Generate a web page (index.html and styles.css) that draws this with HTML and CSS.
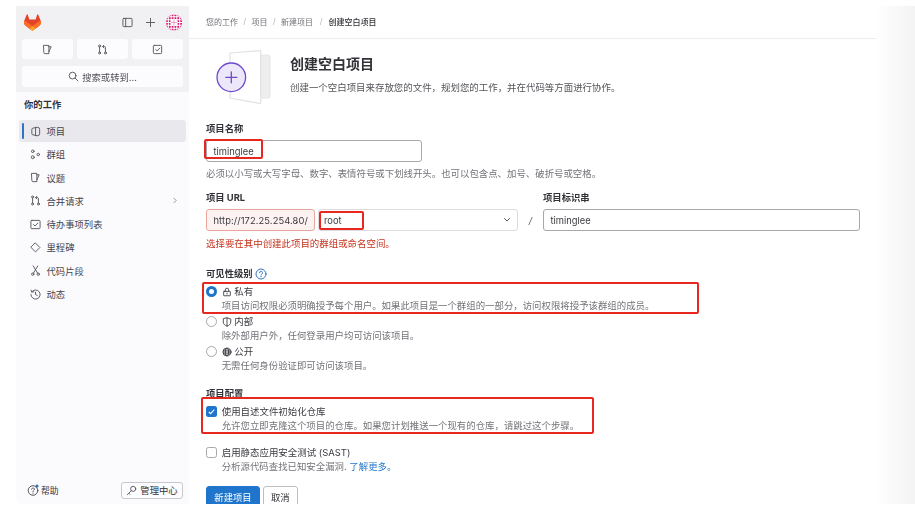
FILE: index.html
```html
<!DOCTYPE html>
<html lang="zh-CN">
<head>
<meta charset="utf-8">
<title>创建空白项目</title>
<link rel="stylesheet" href="styles.css">
</head>
<body>
<div class="frame">
  <aside class="sidebar">
    <div class="side-top">
      <div class="brand-row">
        <svg class="logo" viewBox="0 0 25 24"><path d="m24.507 9.5-.034-.09L21.082.562a.896.896 0 0 0-1.694.091l-2.29 7.01H7.825L5.535.653a.898.898 0 0 0-1.694-.09L.451 9.411.416 9.5a6.297 6.297 0 0 0 2.09 7.278l.012.01.03.022 5.16 3.867 2.56 1.935 1.554 1.176a1.051 1.051 0 0 0 1.268 0l1.555-1.176 2.56-1.935 5.197-3.89.014-.01A6.297 6.297 0 0 0 24.507 9.5Z" fill="#E24329"/><path d="m24.507 9.5-.034-.09a11.44 11.44 0 0 0-4.56 2.051l-7.447 5.632 4.742 3.584 5.197-3.89.014-.01A6.297 6.297 0 0 0 24.507 9.5Z" fill="#FC6D26"/><path d="m7.707 20.677 2.56 1.935 1.555 1.176a1.051 1.051 0 0 0 1.268 0l1.555-1.176 2.56-1.935-4.743-3.584-4.755 3.584Z" fill="#FCA326"/><path d="M5.01 11.461a11.43 11.43 0 0 0-4.56-2.05L.416 9.5a6.297 6.297 0 0 0 2.09 7.278l.012.01.03.022 5.16 3.867 4.745-3.584-7.444-5.632Z" fill="#FC6D26"/></svg>
        <svg class="ic top-panel" viewBox="0 0 12 12"><rect x="1" y="1.5" width="10" height="9" rx="1"/><path d="M4 1.5v9"/></svg>
        <svg class="ic top-plus" viewBox="0 0 12 12"><path d="M6 1.500v9M1.500 6h9"/></svg>
        <svg class="avatar" viewBox="0 0 17 17"><defs><clipPath id="avc"><circle cx="8.500" cy="8.500" r="8.500"/></clipPath></defs><g clip-path="url(#avc)"><rect width="17" height="17" fill="#d6156f"/><path d="M2.500 0v17M5.500 0v17M8.500 0v17M11.500 0v17M14.500 0v17M0 2.500h17M0 5.500h17M0 8.500h17M0 11.500h17M0 14.500h17" stroke="#fff" stroke-width="1.100"/><rect x="5" y="5" width="7" height="7" fill="#fff"/><path d="M5.500 8.500h6M8.500 5.500v6" stroke="#e58ab5" stroke-width=".8"/></g></svg>
      </div>
      <div class="counts">
        <button class="count"><svg class="ic" viewBox="0 0 12 12"><path d="M2 1.500h5.500v9H3a1 1 0 0 1-1-1zM7.500 3H10L7.500 8.500"/></svg></button>
        <button class="count"><svg class="ic" viewBox="0 0 12 12"><circle cx="2.800" cy="2.200" r="1.100"/><circle cx="2.800" cy="9.800" r="1.100"/><circle cx="9.200" cy="9.800" r="1.100"/><path d="M2.800 3.300v5.400M9.200 8.700V4a1.200 1.200 0 0 0-1.200-1.200H6.500M7.500 1.300 6 2.800l1.500 1.500"/></svg></button>
        <button class="count"><svg class="ic" viewBox="0 0 12 12"><rect x="1.500" y="1.500" width="9" height="9" rx="1"/><path d="m4 6 1.600 1.600L8.500 4.500"/></svg></button>
      </div>
      <button class="search"><svg class="ic" viewBox="0 0 12 12"><circle cx="5" cy="5" r="3.700"/><path d="m7.800 7.800 3 3"/></svg><span>搜索或转到...</span></button>
    </div>
    <div class="side-nav">
      <h2 class="side-title">你的工作</h2>
      <ul class="nav">
        <li class="nav-item active"><svg class="ic" viewBox="0 0 12 12"><path d="M6.500 1.500h2a2 2 0 0 1 2 2v5a2 2 0 0 1-2 2h-2zM6.500 1.500 3 2.500a1 1 0 0 0-1 1v5a1 1 0 0 0 1 1l3.500 1"/></svg><span>项目</span></li>
        <li class="nav-item"><svg class="ic" viewBox="0 0 12 12"><circle cx="3" cy="2.500" r="1.400"/><circle cx="3" cy="9" r="1.600"/><circle cx="9" cy="6" r="1.400"/></svg><span>群组</span></li>
        <li class="nav-item"><svg class="ic" viewBox="0 0 12 12"><path d="M2 1.500h5.500v9H3a1 1 0 0 1-1-1zM7.500 3H10L7.500 8.500"/></svg><span>议题</span></li>
        <li class="nav-item"><svg class="ic" viewBox="0 0 12 12"><circle cx="2.800" cy="2.200" r="1.100"/><circle cx="2.800" cy="9.800" r="1.100"/><circle cx="9.200" cy="9.800" r="1.100"/><path d="M2.800 3.300v5.400M9.200 8.700V4a1.200 1.200 0 0 0-1.200-1.200H6.500M7.500 1.300 6 2.800l1.500 1.500"/></svg><span>合并请求</span><svg class="chev" viewBox="0 0 6 8"><path d="m2 1 3 3-3 3"/></svg></li>
        <li class="nav-item"><svg class="ic" viewBox="0 0 12 12"><rect x="1" y="1.500" width="10" height="9" rx="1"/><path d="m3.800 6 1.700 1.700 3-3.200"/></svg><span>待办事项列表</span></li>
        <li class="nav-item"><svg class="ic" viewBox="0 0 12 12"><path d="M6 1.200 10.800 6 6 10.800 1.200 6z"/></svg><span>里程碑</span></li>
        <li class="nav-item"><svg class="ic" viewBox="0 0 12 12"><circle cx="3" cy="10" r="1.300"/><circle cx="9" cy="10" r="1.300"/><path d="M3.700 8.900 8.500 1M8.300 8.900 3.500 1"/></svg><span>代码片段</span></li>
        <li class="nav-item"><svg class="ic" viewBox="0 0 12 12"><path d="M2 3a5 5 0 1 1-1 3M1.200 1.200 2 3.400l2.200-.4M6 3.500V6l2 1.200"/></svg><span>动态</span></li>
      </ul>
      <div class="side-foot">
        <span class="help"><svg class="ic" viewBox="0 0 12 12"><circle cx="6" cy="6.500" r="4.800"/><path d="M4.600 5.200a1.400 1.400 0 1 1 2.100 1.300c-.5.3-.7.6-.7 1M6 9v.3"/><circle class="dot" cx="10" cy="2" r="1.600"/></svg><span>帮助</span></span>
        <button class="admin"><svg class="ic" viewBox="0 0 12 12"><circle cx="7.800" cy="4.200" r="2.800"/><path d="M5.800 6.200 1.500 10.500M3 9l1.200 1.200"/></svg><span>管理中心</span></button>
      </div>
    </div>
  </aside>

  <main class="main">
    <nav class="crumbs">
      <span>您的工作</span><i>/</i><span>项目</span><i>/</i><span>新建项目</span><i class="last-sep">/</i><b>创建空白项目</b>
    </nav>
    <header class="head">
      <svg class="illus" viewBox="0 0 56 54"><path d="M45 5h8a2 2 0 0 1 2 2v39a2 2 0 0 1-2 2h-8z" fill="#eeeeee" stroke="#e6e6e6"/><path d="M15 3 44.500.6a1 1 0 0 1 1.200 1v50.800a1 1 0 0 1-1.200 1L15 48z" fill="#fff" stroke="#e2e2e2" stroke-width="1.200"/><circle cx="16.300" cy="27.300" r="14.300" fill="#ede8f9" stroke="#6e49cb" stroke-width="1.300"/><path d="M16.300 21.800v11M10.800 27.300h11" stroke="#6e49cb" stroke-width="1.300" stroke-linecap="round"/></svg>
      <div class="head-text">
        <h1>创建空白项目</h1>
        <p>创建一个空白项目来存放您的文件，规划您的工作，并在代码等方面进行协作。</p>
      </div>
    </header>

    <form class="form">
      <label class="label name-label">项目名称</label>
      <div class="input name-input">timinglee</div>
      <p class="hint name-hint">必须以小写或大写字母、数字、表情符号或下划线开头。也可以包含点、加号、破折号或空格。</p>

      <div class="url-grid">
        <label class="label">项目 URL</label>
        <span></span>
        <label class="label">项目标识串</label>
        <div class="url-group">
          <div class="input prefix">http://172.25.254.80/</div>
          <div class="input select"><span>root</span><svg class="ic caret" viewBox="0 0 8 6"><path d="m1.500 1.500 2.500 2.500 2.500-2.500"/></svg></div>
        </div>
        <span class="slash">/</span>
        <div class="input slug">timinglee</div>
      </div>
      <p class="error">选择要在其中创建此项目的群组或命名空间。</p>

      <div class="label vis-label">可见性级别 <svg class="qmark" viewBox="0 0 12 12"><circle cx="6" cy="6" r="5"/><path d="M4.500 4.800a1.500 1.500 0 1 1 2.200 1.300c-.5.3-.7.6-.7 1.100M6 8.500v.4"/></svg></div>

      <div class="opt first-opt">
        <span class="radio on"></span>
        <div>
          <div class="opt-title"><svg class="ic" viewBox="0 0 12 12"><rect x="2" y="5.200" width="8" height="5.300" rx=".6"/><path d="M4 5.200V3.400a2 2 0 0 1 4 0v1.800M6 7.200v1.200"/></svg>私有</div>
          <p class="hint">项目访问权限必须明确授予每个用户。如果此项目是一个群组的一部分，访问权限将授予该群组的成员。</p>
        </div>
      </div>
      <div class="opt">
        <span class="radio"></span>
        <div>
          <div class="opt-title"><svg class="ic" viewBox="0 0 12 12"><path d="M6 1 10.500 2.500V6c0 2.500-2 4-4.500 5C3.500 10 1.500 8.500 1.500 6V2.500zM6 1v10"/></svg>内部</div>
          <p class="hint">除外部用户外，任何登录用户均可访问该项目。</p>
        </div>
      </div>
      <div class="opt">
        <span class="radio"></span>
        <div>
          <div class="opt-title"><svg class="ic" viewBox="0 0 12 12"><circle cx="6" cy="6" r="4.800"/><ellipse cx="6" cy="6" rx="2.100" ry="4.800"/><path d="M1.200 6h9.600M1.800 3.800h8.400M1.800 8.200h8.400"/></svg>公开</div>
          <p class="hint">无需任何身份验证即可访问该项目。</p>
        </div>
      </div>

      <div class="label cfg-label">项目配置</div>
      <div class="opt check-opt">
        <span class="check on"><svg viewBox="0 0 12 12"><path d="m3 6.300 2 2 4-4.300"/></svg></span>
        <div>
          <div class="check-title">使用自述文件初始化仓库</div>
          <p class="hint">允许您立即克隆这个项目的仓库。如果您计划推送一个现有的仓库，请跳过这个步骤。</p>
        </div>
      </div>
      <div class="opt check-opt second-check">
        <span class="check"></span>
        <div>
          <div class="check-title">启用静态应用安全测试 (SAST)</div>
          <p class="hint">分析源代码查找已知安全漏洞. <a class="link">了解更多。</a></p>
        </div>
      </div>
      <div class="actions">
        <button class="btn primary" type="button">新建项目</button>
        <button class="btn" type="button">取消</button>
      </div>
    </form>
  </main>
  <div class="rail"></div>

  <div class="mark mark-name"></div>
  <div class="mark mark-root"></div>
  <div class="mark mark-private"></div>
  <div class="mark mark-readme"></div>
</div>
</body>
</html>
```

FILE: styles.css
```css
* { box-sizing: border-box; }
html, body { margin: 0; padding: 0; height: 516px; overflow: hidden; background: #fff; }
body { font-family: Inter, "Noto Sans CJK SC", "Noto Sans", sans-serif; font-size: 9.33px; color: #333238; }
h1, h2, p, ul { margin: 0; padding: 0; }
button { font: inherit; color: inherit; }

.frame { position: relative; display: flex; margin: 6px 0 0 16px; width: 899px; height: 497.5px; overflow: hidden; filter: blur(.3px); }

/* icons */
.ic { width: 11px; height: 11px; flex: none; fill: none; stroke: #55545a; stroke-width: 1; stroke-linecap: round; stroke-linejoin: round; }

/* sidebar */
.sidebar { width: 173px; flex: none; display: flex; flex-direction: column; border-bottom-left-radius: 5px; overflow: hidden; }
.side-top { background: #f1f1f3; height: 86px; padding: 0 5.5px 0 6px; }
.brand-row { display: flex; align-items: center; height: 33px; padding: 0 1.5px 0 2px; }
.logo { width: 18px; height: 17px; margin-right: 81px; }
.top-panel { margin-right: 12px; }
.top-plus { margin-right: 10px; }
.avatar { width: 17px; height: 17px; }
.counts { display: grid; grid-template-columns: repeat(3, 51px); gap: 4px; }
.count { height: 20px; padding: 0; border: 0; border-radius: 3px; background: #fcfbfe; display: flex; align-items: center; justify-content: center; }
.search { display: flex; align-items: center; justify-content: center; gap: 3px; width: 161px; height: 21px; margin-top: 7px; border: 0; border-radius: 3px; background: #fcfbfe; font-size: 9.33px; color: #535158; padding: 0; }

.side-nav { position: relative; flex: 1; background: #fbfafd; padding: 0 3px; }
.side-title { font-size: 9.33px; font-weight: 700; line-height: 14px; padding: 6px 0 0 5px; color: #333238; }
.nav { list-style: none; margin-top: 8px; }
.nav-item { position: relative; display: flex; align-items: center; height: 23.3px; padding-left: 11px; color: #46454b; }
.nav-item .ic { margin-right: 5.5px; }
.nav-item.active { height: 22px; margin-bottom: .65px; background: #e9e8ec; border-radius: 3px; }
.nav-item.active::before { content: ""; position: absolute; left: 3px; top: 3px; bottom: 3px; width: 2px; border-radius: 1px; background: #2f74c0; }
.chev { width: 5px; height: 7px; margin-left: auto; margin-right: 9px; fill: none; stroke: #85848a; stroke-width: 1; }
.side-foot { position: absolute; left: 11px; right: 6px; bottom: 5px; display: flex; align-items: center; justify-content: space-between; }
.help { display: flex; align-items: center; gap: 2px; font-size: 8.8px; }
.help .ic { width: 12px; height: 12px; overflow: visible; }
.help .dot { fill: #2f74c0; stroke: none; }
.admin { display: flex; align-items: center; gap: 3px; height: 17px; width: 62px; justify-content: center; padding: 0; background: #fdfcfe; border: 1px solid #c8c7cc; border-radius: 3px; font-size: 9.33px; }

/* main */
.main { width: 687px; flex: none; padding: 0; background: #fff; overflow: hidden; }
.crumbs { display: flex; align-items: center; gap: 3.8px; height: 33px; padding: 0 0 2px 17px; border-bottom: 1px solid #ececef; font-size: 8px; color: #737278; }
.crumbs i { font-style: normal; color: #b5b4ba; margin: 0 1.5px; }
.crumbs .last-sep { margin-left: 3px; margin-right: 2px; }
.crumbs b { color: #333238; font-weight: 500; }

.head { display: flex; height: 83px; padding: 11px 0 0 26px; }
.illus { width: 56px; height: 54px; margin-right: 19px; flex: none; }
.head-text { padding-top: 4px; }
.head-text h1 { font-size: 14px; font-weight: 700; line-height: 20px; color: #333238; }
.head-text p { font-size: 9.45px; line-height: 14px; margin-top: 7px; color: #55545a; }

.form { padding-left: 17px; width: 671px; }
.label { display: block; font-size: 9.33px; font-weight: 700; line-height: 14px; color: #333238; }
.name-label { margin-bottom: 4px; }
.input { display: flex; align-items: center; height: 22px; padding: 0 6.5px; border: 1px solid #a8a7ad; border-radius: 3px; background: #fff; font-size: 9.33px; color: #3a393f; }
.name-input { width: 216px; }
.hint { font-size: 9.42px; line-height: 14px; color: #737278; white-space: nowrap; }
.name-hint { margin-top: 5px; }

.url-grid { display: grid; grid-template-columns: 312px 25px 317px; row-gap: 4px; margin-top: 10px; }
.url-group { display: flex; gap: 3px; }
.prefix { width: 109px; background: #fbf2f1; border-color: #e8a59c; white-space: nowrap; letter-spacing: .1px; }
.select { flex: 1; padding-left: 5px; border-color: #dcdbe0; justify-content: space-between; }
.caret { width: 8px; height: 6px; }
.slash { align-self: center; text-align: center; color: #55545a; font-style: italic; }
.error { font-size: 9.45px; line-height: 14px; margin-top: 6px; color: #c6341f; }

.vis-label { display: flex; align-items: center; gap: 2px; margin-top: 16px; }
.qmark { width: 12px; height: 12px; fill: none; stroke: #2f74c0; stroke-width: 1; stroke-linecap: round; }

.opt { display: flex; gap: 5px; height: 30px; }
.first-opt { margin-top: 3.5px; }
.opt-title { display: flex; align-items: center; gap: 2.5px; line-height: 14px; font-size: 9.45px; color: #3a393f; }
.opt-title .ic { width: 10px; height: 10px; stroke: #333238; }
.radio { flex: none; width: 11px; height: 11px; margin-top: 1.5px; margin-left: -.3px; border: 1px solid #a8a7ad; border-radius: 50%; background: #fff; }
.radio.on { border: 3px solid #1f75cb; }
.check { flex: none; display: block; width: 11px; height: 11px; margin-top: 1.5px; margin-left: -.3px; border: 1px solid #a8a7ad; border-radius: 2.5px; background: #fff; }
.check.on { border: 0; background: #1f75cb; }
.check svg { display: block; width: 11px; height: 11px; fill: none; stroke: #fff; stroke-width: 1.2px; }
.check-title { line-height: 14px; font-size: 9.45px; color: #3a393f; }
.cfg-label { margin-top: 12px; }
.check-opt { margin-top: 4px; }
.second-check { margin-top: 11px; }
.link { color: #1f75cb; }

.actions { display: flex; gap: 3px; margin-top: 10px; }
.btn { height: 22px; padding: 0 7px; background: #fff; border: 1px solid #bfbfc3; border-radius: 3px; font-size: 9.33px; color: #333238; }
.btn.primary { width: 54px; background: #1f75cb; border-color: #1f75cb; color: #fff; }

/* right edge fade */
.rail { flex: 1; background: linear-gradient(to right, #fff, #f3f3f3); }

/* red review annotations painted over the form */
.mark { position: absolute; border: 2px solid #e8281e; border-radius: 2px; pointer-events: none; }
.mark-name { left: 188px; top: 133px; width: 59px; height: 20px; }
.mark-root { left: 303px; top: 205px; width: 45px; height: 19px; }
.mark-private { left: 186px; top: 276px; width: 497px; height: 32px; }
.mark-readme { left: 185px; top: 391px; width: 393px; height: 37px; }
```
